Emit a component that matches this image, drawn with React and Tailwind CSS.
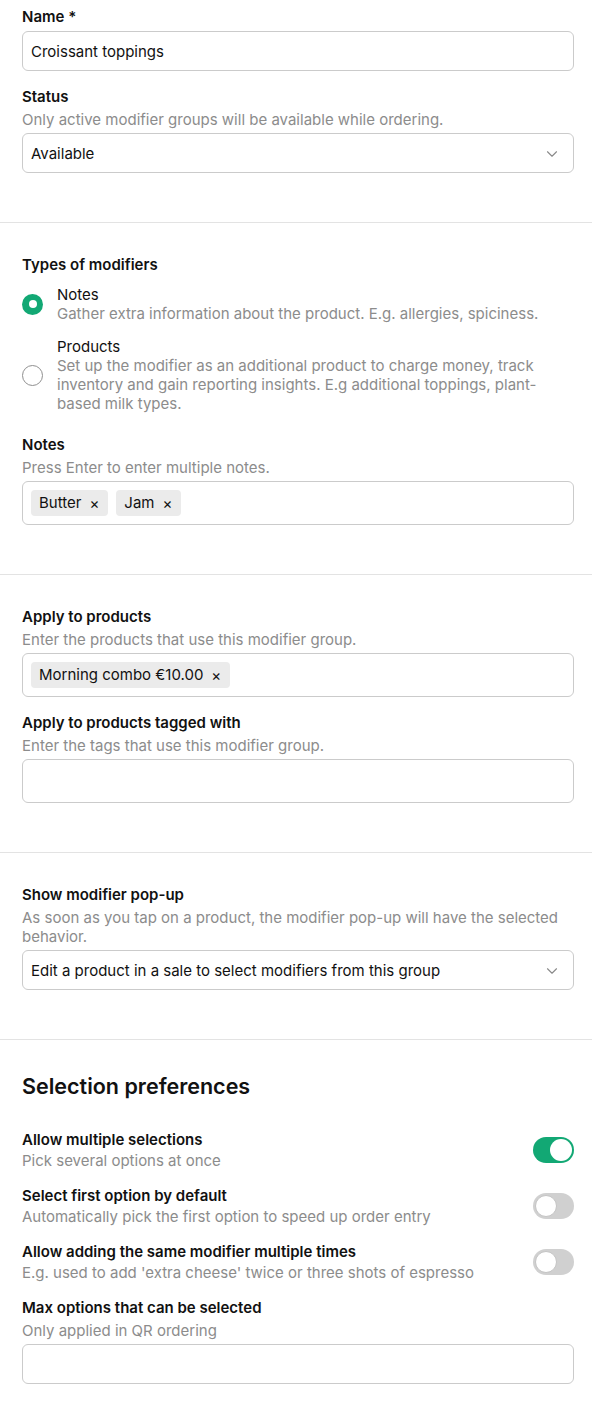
import React, { useState } from 'react'
import { ChevronDown } from 'lucide-react'

const Label = ({ children }) => (
  <div className="text-[15px] leading-5 font-semibold text-[#111]">{children}</div>
)

const Hint = ({ children, className = '' }) => (
  <div className={`text-[15px] leading-[19px] text-[#8c8c8c] ${className}`}>{children}</div>
)

const TextInput = ({ value = '', className = '' }) => (
  <div className={`h-10 rounded-md border border-[#cbcbcb] px-2 pt-[2px] flex items-center text-[15px] text-[#111] ${className}`}>
    {value}
  </div>
)

const Select = ({ value, className = '' }) => (
  <div className={`h-10 rounded-md border border-[#cbcbcb] pl-2 pr-3 pt-[2px] flex items-center justify-between text-[15px] text-[#111] ${className}`}>
    <span>{value}</span>
    <ChevronDown size={18} strokeWidth={1.5} className="text-[#8a8a8a]" />
  </div>
)

const TagInput = ({ tags = [], className = '' }) => (
  <div className={`h-[44px] rounded-md border border-[#cbcbcb] px-2 flex items-center gap-2 ${className}`}>
    {tags.map(tag => (
      <span key={tag} className="h-[26px] rounded bg-[#ebebeb] pl-2 pr-[9px] pt-[1px] flex items-center gap-2 text-[15px] text-[#111]">
        {tag}
        <span className="text-[15px] leading-none">×</span>
      </span>
    ))}
  </div>
)

const Toggle = ({ on }) => (
  <div className={`w-[41px] h-[26px] rounded-full p-[2px] flex ${on ? 'bg-[#12a874] justify-end' : 'bg-[#d0d0d0] justify-start'}`}>
    <div className={`w-[22px] h-[22px] rounded-full bg-white ${on ? '' : 'border border-[#c4c4c4]'}`} />
  </div>
)

const Radio = ({ checked }) =>
  checked ? (
    <div className="w-[21px] h-[21px] rounded-full bg-[#12a874] flex items-center justify-center">
      <div className="w-[8px] h-[8px] rounded-full bg-white" />
    </div>
  ) : (
    <div className="w-[21px] h-[21px] rounded-full border border-[#8f8f8f] bg-white" />
  )

const Divider = () => <div className="h-px bg-[#e3e3e3]" />

const ToggleRow = ({ title, hint, on }) => (
  <div className="flex items-center justify-between">
    <div>
      <Label>{title}</Label>
      <Hint className="mt-[1px]">{hint}</Hint>
    </div>
    <Toggle on={on} />
  </div>
)

export default function App() {
  const [type] = useState('notes')

  return (
    <div className="w-[592px] bg-white font-[Inter,sans-serif] antialiased">
      {/* Basics */}
      <div className="pl-[22px] pr-[18px] pt-[7px] pb-[49px]">
        <Label>Name *</Label>
        <TextInput value="Croissant toppings" className="mt-1" />
        <div className="mt-4">
          <Label>Status</Label>
          <Hint className="mt-[3px]">Only active modifier groups will be available while ordering.</Hint>
          <Select value="Available" className="mt-1" />
        </div>
      </div>
      <Divider />

      {/* Types of modifiers */}
      <div className="pl-[22px] pr-[18px] pt-8 pb-[49px]">
        <Label>Types of modifiers</Label>
        <div className="mt-[10px] flex flex-col gap-[14px]">
          <div className="flex items-center">
            <div className="w-[35px] shrink-0"><Radio checked={type === 'notes'} /></div>
            <div>
              <div className="text-[15px] leading-[19px] text-[#111]">Notes</div>
              <Hint>Gather extra information about the product. E.g. allergies, spiciness.</Hint>
            </div>
          </div>
          <div className="flex items-center">
            <div className="w-[35px] shrink-0"><Radio checked={type === 'products'} /></div>
            <div>
              <div className="text-[15px] leading-[19px] text-[#111]">Products</div>
              <Hint>Set up the modifier as an additional product to charge money, track inventory and gain reporting insights. E.g additional toppings, plant-based milk types.</Hint>
            </div>
          </div>
        </div>
        <div className="mt-[22px]">
          <Label>Notes</Label>
          <Hint className="mt-[3px]">Press Enter to enter multiple notes.</Hint>
          <TagInput tags={['Butter', 'Jam']} className="mt-1" />
        </div>
      </div>
      <Divider />

      {/* Apply to products */}
      <div className="pl-[22px] pr-[18px] pt-8 pb-[49px]">
        <Label>Apply to products</Label>
        <Hint className="mt-[3px]">Enter the products that use this modifier group.</Hint>
        <TagInput tags={['Morning combo €10.00']} className="mt-1" />
        <div className="mt-4">
          <Label>Apply to products tagged with</Label>
          <Hint className="mt-[3px]">Enter the tags that use this modifier group.</Hint>
          <TagInput tags={[]} className="mt-1" />
        </div>
      </div>
      <Divider />

      {/* Modifier pop-up */}
      <div className="pl-[22px] pr-[18px] pt-8 pb-[49px]">
        <Label>Show modifier pop-up</Label>
        <Hint className="mt-[3px]">As soon as you tap on a product, the modifier pop-up will have the selected behavior.</Hint>
        <Select value="Edit a product in a sale to select modifiers from this group" className="mt-1" />
      </div>
      <Divider />

      {/* Selection preferences */}
      <div className="pl-[22px] pr-[18px] pt-8 pb-6">
        <h2 className="text-[21.5px] leading-7 font-semibold text-[#111]">Selection preferences</h2>
        <div className="mt-[30px] flex flex-col gap-4">
          <ToggleRow title="Allow multiple selections" hint="Pick several options at once" on />
          <ToggleRow title="Select first option by default" hint="Automatically pick the first option to speed up order entry" />
          <ToggleRow title="Allow adding the same modifier multiple times" hint="E.g. used to add 'extra cheese' twice or three shots of espresso" />
          <div>
            <Label>Max options that can be selected</Label>
            <Hint className="mt-[3px]">Only applied in QR ordering</Hint>
            <TextInput className="mt-1" />
          </div>
        </div>
      </div>
    </div>
  )
}
